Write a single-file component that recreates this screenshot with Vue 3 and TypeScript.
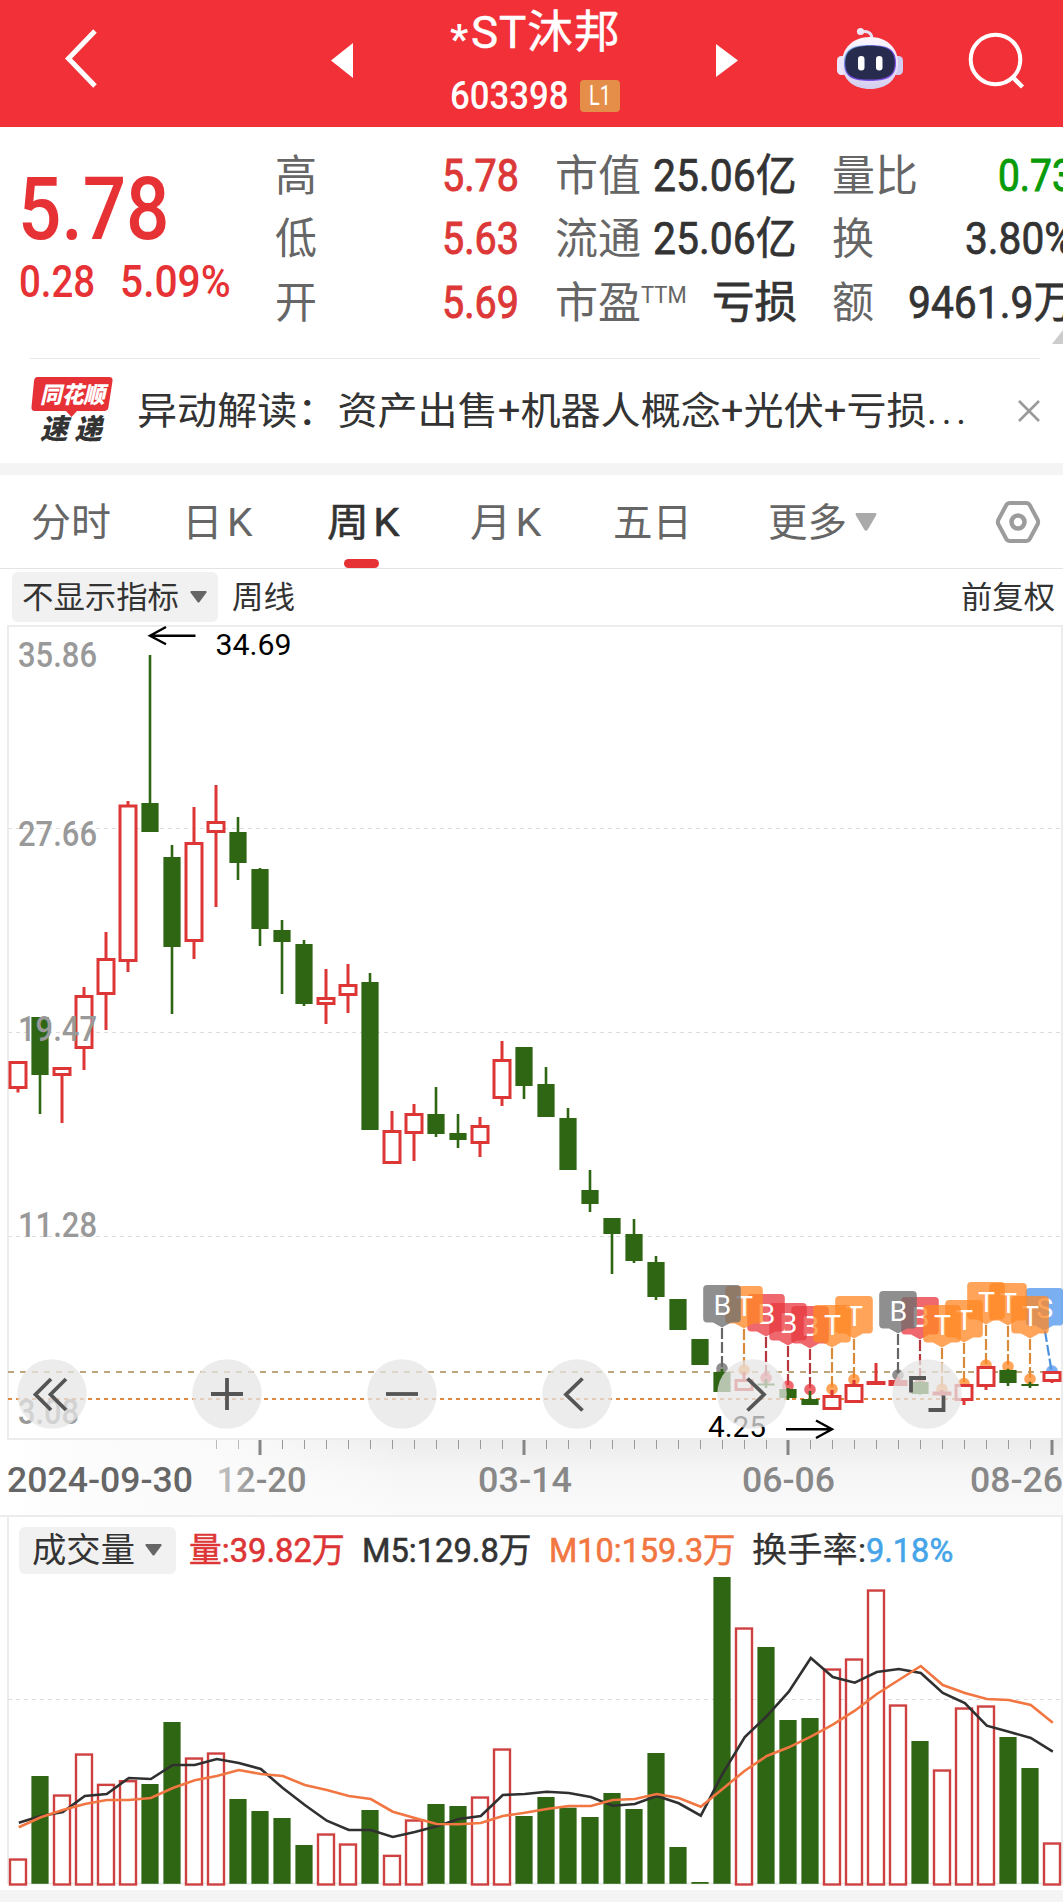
<script setup lang="ts">
interface Cell {
  label: string
  labelWidth: number
  sup?: string
  value: string
  valueWidth: number
  tone: 'up' | 'down' | 'plain'
}

interface Candle {
  up: boolean
  high: number
  top: number
  bottom: number
  low: number
}

interface Flag {
  index: number
  top: number
  letter: string
  kind: 'grey' | 'orange' | 'red' | 'blue'
  dot: number
}

// Squeezes or stretches a run of text to the given advance width.
const vFit = {
  mounted(el: HTMLElement, binding: { value: number }) {
    el.style.display = 'inline-block'
    el.style.whiteSpace = 'nowrap'
    const natural = el.offsetWidth
    el.style.transformOrigin = 'left center'
    el.style.transform = `scaleX(${binding.value / natural})`
    el.style.marginRight = `${binding.value - natural}px`
  },
}

const columns: Cell[][] = [
  [
    { label: '高', labelWidth: 42, value: '5.78', valueWidth: 77, tone: 'up' },
    { label: '低', labelWidth: 42, value: '5.63', valueWidth: 77, tone: 'up' },
    { label: '开', labelWidth: 42, value: '5.69', valueWidth: 77, tone: 'up' },
  ],
  [
    { label: '市值', labelWidth: 86, value: '25.06亿', valueWidth: 144, tone: 'plain' },
    { label: '流通', labelWidth: 86, value: '25.06亿', valueWidth: 144, tone: 'plain' },
    { label: '市盈', labelWidth: 86, sup: 'TTM', value: '亏损', valueWidth: 85, tone: 'plain' },
  ],
  [
    { label: '量比', labelWidth: 86, value: '0.73', valueWidth: 76, tone: 'down' },
    { label: '换', labelWidth: 42, value: '3.80%', valueWidth: 109, tone: 'plain' },
    { label: '额', labelWidth: 42, value: '9461.9万', valueWidth: 166, tone: 'plain' },
  ],
]

const STEP = 22
const cx = (i: number) => 18 + i * STEP

const c = (up: number, high: number, top: number, bottom: number, low: number): Candle => ({
  up: up === 1,
  high,
  top,
  bottom,
  low,
})

const candles: Candle[] = [
  c(1, 1061, 1061, 1089, 1092.5), c(0, 1017, 1017, 1075, 1114), c(1, 1067, 1067, 1076, 1123),
  c(1, 987, 995, 1049, 1070), c(1, 932, 958, 995, 1030), c(1, 801, 804.5, 962, 972),
  c(0, 655, 803, 832, 832), c(0, 845, 857, 947, 1014), c(1, 807, 842, 942, 959),
  c(1, 785, 821, 833, 907), c(0, 817, 832, 863, 880), c(0, 868, 869, 929, 946),
  c(0, 920, 930, 942, 994), c(0, 940, 944, 1004, 1006), c(1, 969, 997, 1005, 1024),
  c(1, 964, 984, 996, 1013), c(0, 973, 982, 1130, 1130), c(1, 1111, 1130, 1164, 1164),
  c(1, 1104, 1113, 1134, 1161), c(0, 1087, 1114, 1134, 1137), c(0, 1114, 1133, 1140, 1148),
  c(1, 1117, 1125, 1144, 1157), c(1, 1041, 1059, 1099, 1106), c(0, 1047, 1047, 1086, 1099),
  c(0, 1067, 1084, 1117, 1117), c(0, 1108, 1118, 1170, 1170), c(0, 1170, 1190, 1204, 1212),
  c(0, 1218, 1218, 1234, 1274), c(0, 1219, 1234, 1261, 1263), c(0, 1256, 1262, 1297, 1300),
  c(0, 1299, 1299, 1330, 1330), c(0, 1339, 1339, 1365, 1365), c(0, 1369, 1372, 1392, 1392),
  c(1, 1372, 1379, 1391, 1391), c(0, 1379, 1383.5, 1385.5, 1388), c(0, 1388, 1389, 1398, 1400),
  c(0, 1391, 1399, 1405, 1405), c(1, 1390, 1395, 1410, 1410), c(1, 1380, 1384, 1403, 1403),
  c(1, 1363, 1381, 1385, 1385), c(1, 1377, 1380, 1386, 1386), c(0, 1381, 1382, 1394, 1394.5),
  c(1, 1390, 1391.5, 1395.5, 1396), c(1, 1384, 1384, 1401, 1405), c(1, 1366, 1366, 1387, 1390),
  c(0, 1369, 1370, 1383, 1386), c(0, 1382, 1384, 1386, 1388), c(1, 1371, 1371, 1382, 1383),
]

// Painted back to front.
const flags: Flag[] = [
  { index: 47, top: 1288, letter: 'S', kind: 'blue', dot: 1371 },
  { index: 41, top: 1297, letter: 'B', kind: 'red', dot: 1384 },
  { index: 36, top: 1306, letter: 'B', kind: 'red', dot: 1389.5 },
  { index: 35, top: 1303, letter: 'B', kind: 'red', dot: 1386 },
  { index: 34, top: 1294, letter: 'B', kind: 'red', dot: 1378 },
  { index: 46, top: 1296, letter: 'T', kind: 'orange', dot: 1379 },
  { index: 45, top: 1283, letter: 'T', kind: 'orange', dot: 1366.5 },
  { index: 44, top: 1282, letter: 'T', kind: 'orange', dot: 1365 },
  { index: 43, top: 1300, letter: 'T', kind: 'orange', dot: 1383.5 },
  { index: 42, top: 1305, letter: 'T', kind: 'orange', dot: 1389 },
  { index: 38, top: 1296, letter: 'T', kind: 'orange', dot: 1379.5 },
  { index: 37, top: 1305, letter: 'T', kind: 'orange', dot: 1389 },
  { index: 33, top: 1286, letter: 'T', kind: 'orange', dot: 1370 },
  { index: 40, top: 1291, letter: 'B', kind: 'grey', dot: 1375 },
  { index: 32, top: 1285, letter: 'B', kind: 'grey', dot: 1368.5 },
]
const flagX = (f: Flag) => (f.index === 47 ? 1044.3 : cx(f.index))
const flagShape = (f: Flag) => {
  const x = flagX(f)
  const l = x - 18.8
  const r = x + 18.8
  const t = f.top
  const b = t + 37.5
  return `M${l + 4} ${t}H${r - 4}Q${r} ${t} ${r} ${t + 4}V${b - 4}Q${r} ${b} ${r - 4} ${b}H${x + 9}L${x} ${b + 5}L${x - 9} ${b}H${l + 4}Q${l} ${b} ${l} ${b - 4}V${t + 4}Q${l} ${t} ${l + 4} ${t}Z`
}

const priceLabels = [
  { text: '35.86', y: 667, x: 18, w: 79 },
  { text: '27.66', y: 846, x: 18, w: 79 },
  { text: '19.47', y: 1041, x: 18, w: 79 },
  { text: '11.28', y: 1237, x: 18, w: 79 },
  { text: '3.08', y: 1424, x: 18, w: 61 },
]

const ticks = Array.from({ length: 39 }, (_, k) => k + 9)
const isMajor = (i: number) => (i + 1) % 12 === 0
const dates = [
  { text: '2024-09-30', x: 7, w: 186, cls: 'strong' },
  { text: '12-20', x: 216.5, w: 90, cls: 'fade' },
  { text: '03-14', x: 478, w: 94, cls: '' },
  { text: '06-06', x: 742, w: 93, cls: '' },
  { text: '08-26', x: 970, w: 93, cls: '' },
]

const volumeTops = [
  895, 648, 703, 580, 671, 660, 672, 486, 592, 577, 717, 753, 774, 855, 820, 850, 750, 884, 778, 732, 738, 709, 565,
  768, 711, 743, 771, 699, 747, 579, 861, 966, 51, 202, 261, 480, 474, 325, 295, 88, 433, 543, 628, 442, 436, 531,
  624, 847,
].map((v) => 1560 + v / 3)

const m5 = [
  788, 768, 756, 708, 702, 654, 657, 615, 615, 597, 609, 627, 684, 735, 782, 810, 810, 831, 816, 799, 777, 768, 705,
  702, 695, 699, 711, 737, 732, 708, 730, 767, 640, 531, 468, 395, 294, 351, 368, 336, 327, 339, 399, 429, 497, 515,
  534, 575,
]
const m10 = [
  802, 772, 750, 732, 720, 720, 714, 684, 661, 648, 630, 642, 648, 675, 690, 708, 717, 755, 774, 792, 793, 789, 768,
  758, 747, 738, 738, 720, 717, 702, 714, 740, 686, 632, 588, 562, 530, 494, 452, 402, 360, 318, 375, 399, 417, 420,
  435, 488,
]
const line = (vs: number[]) => vs.map((v, i) => `${cx(i) + 0.8},${(1560 + v / 3).toFixed(1)}`).join(' ')

const controls = [
  { x: 52, d: 'M51 1379L35.5 1394.5L51 1410M66 1379L50.5 1394.5L66 1410' },
  { x: 227, d: 'M211 1394H243M227 1378V1410' },
  { x: 402, d: 'M386 1394H418' },
  { x: 577, d: 'M582.5 1378.5L566 1394.5L582.5 1410.5' },
  { x: 752, d: 'M747.5 1378.5L764 1394.5L747.5 1410.5' },
  { x: 927, d: 'M926 1378H911V1392.5M928.5 1410H943.5V1395.5' },
]
</script>

<template>
  <div class="page">
    <header class="head">
      <svg class="back" width="36" height="66" viewBox="0 0 36 66">
        <path d="M32 5L5.500 32.500L32 60" fill="none" stroke="#fff" stroke-width="5" />
      </svg>
      <svg class="prev" width="22" height="35" viewBox="0 0 22 35"><path d="M22 0V35L0 17.500Z" fill="#fff" /></svg>
      <div class="title">
        <div class="name"><span class="star">*</span><span v-fit="150" class="word">ST沐邦</span></div>
        <div class="code">
          <span v-fit="119">603398</span>
          <span class="badge"><span v-fit="22">L1</span></span>
        </div>
      </div>
      <svg class="next" width="22" height="33" viewBox="0 0 22 33"><path d="M0 0V33L22 16.500Z" fill="#fff" /></svg>
      <svg class="robot" width="68" height="64" viewBox="0 0 68 64">
        <defs>
          <linearGradient id="shell" x1="0" y1="0" x2="0" y2="1">
            <stop offset="0" stop-color="#fbf7ff" />
            <stop offset=".7" stop-color="#e3dcf6" />
            <stop offset="1" stop-color="#d3cdee" />
          </linearGradient>
          <linearGradient id="rim" x1="0" y1="0" x2="1" y2="1">
            <stop offset="0" stop-color="#7fc8f2" />
            <stop offset=".5" stop-color="#6a45d8" />
            <stop offset="1" stop-color="#8b5cf0" />
          </linearGradient>
        </defs>
        <path d="M25 5Q35 3 36 11" fill="none" stroke="#e9dff5" stroke-width="3" />
        <circle cx="24.500" cy="4.500" r="3.600" fill="#efe6f7" />
        <rect x="1" y="29" width="10" height="19" rx="4.500" fill="#ece6fa" />
        <rect x="57" y="29" width="10" height="19" rx="4.500" fill="#d3cdf2" />
        <path d="M34 10C51 10 62 21 62 36C62 53 50 62 34 62C18 62 6 53 6 36C6 21 17 10 34 10Z" fill="url(#shell)" />
        <path d="M34 18C50 18 60 21 60 36C60 51 50 54 34 54C18 54 8 51 8 36C8 21 18 18 34 18Z" fill="url(#rim)" />
        <path d="M34 18.800C49 18.800 58.800 22 58.800 36C58.800 50 49 52.600 34 52.600C19 52.600 9.200 50 9.200 36C9.200 22 19 18.800 34 18.800Z" fill="#272c4e" />
        <rect x="22" y="29" width="6.500" height="14.500" rx="3.200" fill="#fff" />
        <rect x="40" y="29" width="6.500" height="14.500" rx="3.200" fill="#fff" />
      </svg>
      <svg class="search" width="58" height="58" viewBox="0 0 58 58">
        <circle cx="27.500" cy="27.500" r="24.800" fill="none" stroke="#fff" stroke-width="4" />
        <path d="M44.500 45L54.500 55" stroke="#fff" stroke-width="4.500" />
      </svg>
    </header>

    <section class="quote">
      <div class="price">
        <div class="last"><span v-fit="152">5.78</span></div>
        <div class="change"><span v-fit="76">0.28</span><span v-fit="111">5.09%</span></div>
      </div>
      <div v-for="(col, n) in columns" :key="n" class="col" :class="'col' + n">
        <div v-for="cell in col" :key="cell.label" class="cell">
          <span class="label">
            <span v-fit="cell.labelWidth">{{ cell.label }}</span><sup v-if="cell.sup" v-fit="46">{{ cell.sup }}</sup>
          </span>
          <span class="value" :class="cell.tone"><span v-fit="cell.valueWidth">{{ cell.value }}</span></span>
        </div>
      </div>
      <i class="corner"></i>
    </section>

    <section class="news">
      <div class="brand">
        <svg width="84" height="42" viewBox="0 0 84 42">
          <path d="M7.500 1H79Q83 1 82.500 5L78.500 31Q78 35 74 35H47L41.500 41L36 35H5Q1 35 1.500 31L4 5Q4.500 1 7.500 1Z" fill="#e63136" />
          <text x="10" y="27" textLength="65" lengthAdjust="spacingAndGlyphs" class="brand-top">同花顺</text>
        </svg>
        <span v-fit="62" class="brand-bottom">速 递</span>
      </div>
      <span v-fit="790" class="headline">异动解读：资产出售+机器人概念+光伏+亏损</span><span v-fit="44" class="headline dots">...</span>
      <svg class="close" width="22" height="22" viewBox="0 0 22 22">
        <path d="M1 1L21 21M21 1L1 21" stroke="#999" stroke-width="2.600" />
      </svg>
    </section>

    <nav class="tabs">
      <span class="tab t1"><span v-fit="80">分时</span></span>
      <span class="tab t2"><span v-fit="71" class="gap">日K</span></span>
      <span class="tab t3 active"><span v-fit="73" class="gap">周K</span></span>
      <span class="tab t4"><span v-fit="72" class="gap">月K</span></span>
      <span class="tab t5"><span v-fit="79">五日</span></span>
      <span class="tab t6"><span v-fit="79">更多</span></span>
      <svg class="more" width="22" height="18" viewBox="0 0 22 18"><path d="M1.500 0H20.500Q22 .5 21 2.500L12.500 17Q11 18.500 9.500 17L1 2.500Q0 .5 1.500 0Z" fill="#aaa" /></svg>
      <svg class="gear" width="46" height="44" viewBox="0 0 46 44">
        <path d="M15 3H31Q33.500 3 34.700 5L42.500 19.500Q43.800 22 42.500 24.500L34.700 39Q33.500 41 31 41H15Q12.500 41 11.300 39L3.500 24.500Q2.200 22 3.500 19.500L11.300 5Q12.500 3 15 3Z" fill="none" stroke="#9c9c9c" stroke-width="4" />
        <circle cx="23" cy="22" r="6.500" fill="none" stroke="#9c9c9c" stroke-width="4.500" />
      </svg>
    </nav>

    <div class="toolbar">
      <span class="pill"><span v-fit="157" class="lift">不显示指标</span><svg width="17" height="12" viewBox="0 0 17 12"><path d="M1 0H16Q17 .5 16.500 1.500L9.500 11Q8.500 12 7.500 11L.5 1.500Q0 .5 1 0Z" fill="#666" /></svg></span>
      <span v-fit="63" class="period lift">周线</span>
      <span v-fit="94" class="adjust lift">前复权</span>
    </div>

    <svg class="kline" width="1063" height="890" viewBox="0 625 1063 890">
      <defs>
        <linearGradient id="axis-shade" x1="0" y1="0" x2="0" y2="1">
          <stop offset="0" stop-color="#ececec" />
          <stop offset=".45" stop-color="#f6f6f6" />
          <stop offset="1" stop-color="#fafafa" />
        </linearGradient>
        <linearGradient id="axis-fade" x1="0" y1="0" x2="1" y2="0">
          <stop offset="0" stop-color="#fff" />
          <stop offset=".12" stop-color="#fdfdfd" />
          <stop offset=".55" stop-color="#fbfbfb" stop-opacity=".9" />
          <stop offset="1" stop-color="#fff" stop-opacity="0" />
        </linearGradient>
        <linearGradient id="date-fade" gradientUnits="userSpaceOnUse" x1="214" y1="0" x2="262" y2="0">
          <stop offset="0" stop-color="#ccc" />
          <stop offset="1" stop-color="#888" />
        </linearGradient>
      </defs>

      <rect x="8" y="1440" width="1055" height="76" fill="url(#axis-shade)" />
      <rect x="8" y="1440" width="400" height="76" fill="url(#axis-fade)" />

      <g class="grid">
        <path d="M8 828.500H1063M8 1032.500H1063M8 1236.500H1063" />
      </g>
      <path class="frame" d="M1063 626H8V1439H1063M1062 626V1439" />
      <path d="M8 1372H1062" stroke="#bda57c" stroke-width="2" stroke-dasharray="6 6" />
      <path d="M8 1399H1062" stroke="#e0883f" stroke-width="2" stroke-dasharray="4 4" />

      <g v-for="f in flags" :key="'s' + f.index" :class="f.kind">
        <line class="stem" :x1="f.index === 47 ? 1045 : cx(f.index)" :y1="f.top + 43" :x2="cx(f.index)" :y2="f.dot + 3" />
        <circle class="dot" :cx="cx(f.index)" :cy="f.dot" r="5.800" />
      </g>

      <g v-for="(k, i) in candles" :key="'k' + i">
        <template v-if="k.up">
          <path class="up-line" :d="`M${cx(i)} ${k.high}V${k.top + 1}M${cx(i)} ${k.bottom - 1}V${k.low}`" />
          <rect class="up-box" :x="cx(i) - 8" :y="k.top + 1.5" width="16" :height="Math.max(0.5, k.bottom - k.top - 3)" />
        </template>
        <template v-else>
          <path class="down-line" :d="`M${cx(i)} ${k.high}V${k.low}`" />
          <rect class="down-box" :x="cx(i) - 8.6" :y="k.top" width="17.200" :height="k.bottom - k.top" />
        </template>
      </g>

      <g v-for="f in flags" :key="'f' + f.index" :class="f.kind">
        <path class="flag" :d="flagShape(f)" />
        <text class="flag-text" :x="flagX(f) + 0.5" :y="f.top + 29.500">{{ f.letter }}</text>
      </g>

      <g class="price-labels">
        <text v-for="p in priceLabels" :key="p.text" :x="p.x" :y="p.y" :textLength="p.w" lengthAdjust="spacingAndGlyphs">{{ p.text }}</text>
      </g>

      <g class="mark">
        <text x="215.500" y="655" textLength="76" lengthAdjust="spacingAndGlyphs">34.69</text>
        <path d="M195.500 635.700H151M166 627L150 635.700L166 644.300" />
        <text x="708" y="1437" textLength="58" lengthAdjust="spacingAndGlyphs">4.25</text>
        <path d="M786 1429.300H831M816 1420.500L832 1429.300L816 1438" />
      </g>

      <g v-for="b in controls" :key="b.x">
        <circle :cx="b.x" cy="1394" r="34.800" fill="#e6e6e6" fill-opacity=".74" />
        <path :d="b.d" fill="none" stroke="#555" stroke-width="3.800" />
      </g>

      <template v-for="i in ticks" :key="'t' + i">
        <rect v-if="isMajor(i)" :x="cx(i) - 1.5" y="1440" width="3" height="15" fill="#858585" />
        <rect v-else :x="cx(i)" y="1440" width="1" height="9" :fill="i < 11 ? '#bbb' : '#999'" />
      </template>
      <g class="dates">
        <text v-for="d in dates" :key="d.text" :class="d.cls" :x="d.x" y="1492" :textLength="d.w" lengthAdjust="spacingAndGlyphs">{{ d.text }}</text>
      </g>
    </svg>

    <section class="volume">
      <div class="legend">
        <span class="pill vol"><span v-fit="103">成交量</span><svg width="17" height="12" viewBox="0 0 17 12"><path d="M1 0H16Q17 .5 16.500 1.500L9.500 11Q8.500 12 7.500 11L.5 1.500Q0 .5 1 0Z" fill="#666" /></svg></span>
        <span v-fit="156" class="l1">量:39.82万</span>
        <span v-fit="169" class="l2">M5:129.8万</span>
        <span v-fit="187" class="l3">M10:159.3万</span>
        <span v-fit="114" class="l4">换手率:</span>
        <span v-fit="87" class="l5">9.18%</span>
      </div>
      <svg class="bars" width="1063" height="314" viewBox="0 1576 1063 314">
        <path class="grid" d="M8 1699.500H1063" />
        <path d="M8 1883.500H1063" stroke="#ebebeb" stroke-width="2" />
        <g v-for="(t, i) in volumeTops" :key="i">
          <rect v-if="candles[i].up" class="vol-up" :x="cx(i) - 8" :y="t + 1.2" width="16" :height="1883.3 - t" />
          <rect v-else class="down-box" :x="cx(i) - 8.6" :y="t" width="17.200" :height="1883.8 - t" />
        </g>
        <polyline :points="line(m5)" fill="none" stroke="#303030" stroke-width="2.600" />
        <polyline :points="line(m10)" fill="none" stroke="#f27641" stroke-width="2.600" />
      </svg>
    </section>
    <div class="foot"></div>
  </div>
</template>

<style>
body {
  background: #fff;
  overflow: hidden;
}
</style>

<style scoped>
.page {
  width: 1063px;
  height: 1902px;
  overflow: hidden;
  background: #fff;
  color: #333;
  font-family: Roboto, 'Noto Sans CJK SC', sans-serif;
}
svg {
  display: block;
  flex: none;
}
.head {
  display: flex;
  height: 127px;
  background: #f23038;
  color: #fff;
}
.back {
  margin: 26px 0 0 63px;
}
.prev {
  margin: 43px 0 0 232px;
}
.title {
  width: 184px;
  margin-left: 97px;
}
.name {
  display: flex;
  height: 66px;
  line-height: 66px;
}
.star {
  width: 21px;
  font-size: 40px;
  font-weight: 700;
  line-height: 79px;
}
.word {
  font-size: 45px;
  letter-spacing: 1px;
  -webkit-text-stroke: 0.5px;
}
.code {
  display: flex;
  align-items: center;
  height: 59px;
  font-size: 38px;
  font-weight: 500;
}
.badge {
  display: flex;
  align-items: center;
  box-sizing: border-box;
  width: 40px;
  height: 32px;
  margin-left: 11px;
  padding-left: 9px;
  border-radius: 4px;
  background: #e58e49;
  font-size: 28px;
  font-weight: 400;
}
.next {
  margin: 44px 0 0 82px;
}
.robot {
  margin: 27px 0 0 98px;
}
.search {
  margin: 32px 0 0 64px;
}
.quote {
  position: relative;
  display: flex;
  height: 231px;
  font-size: 44px;
}
.price {
  flex: none;
  width: 276px;
  color: #e63135;
  font-weight: 500;
}
.last {
  height: 107px;
  margin: 28px 0 0 18px;
  font-size: 88px;
  line-height: 107px;
}
.change {
  display: flex;
  gap: 25px;
  height: 40px;
  margin: 0 0 0 19px;
  line-height: 40px;
}
.col {
  flex: none;
  padding-top: 18px;
}
.col0 {
  width: 244px;
  margin-left: -1px;
}
.col1 {
  width: 242px;
  margin-left: 36px;
}
.col2 {
  width: 242px;
  margin-left: 35px;
}
.cell {
  display: flex;
  justify-content: space-between;
  height: 63.4px;
  line-height: 63.4px;
}
.label {
  display: flex;
  color: #666;
  font-size: 43px;
}
.label sup {
  font-size: 23px;
  line-height: 48px;
  vertical-align: baseline;
}
.value {
  -webkit-text-stroke: 0.75px;
}
.value.up {
  color: #dd3838;
  -webkit-text-stroke: 1px;
}
.value.down {
  color: #099b09;
  -webkit-text-stroke: 1px;
}
.corner {
  position: absolute;
  right: 0;
  bottom: 14px;
  width: 11px;
  height: 14px;
  background: #ccc;
  clip-path: polygon(0 100%, 100% 0, 100% 100%);
}
.news {
  display: flex;
  align-items: center;
  height: 104px;
  margin: 0 23px 0 30px;
  border-top: 1px solid #e8e8e8;
}
.brand {
  width: 107px;
  height: 70px;
}
.brand-top {
  font: italic 900 23px 'Noto Sans CJK SC', sans-serif;
  fill: #fff;
}
.brand-bottom {
  margin: -5px 0 0 10px;
  font-size: 28px;
  font-style: italic;
  font-weight: 900;
  line-height: 34px;
}
.headline {
  font-size: 38px;
  line-height: 60px;
}
.dots {
  letter-spacing: 5px;
}
.close {
  margin-left: auto;
}
.tabs {
  display: flex;
  align-items: center;
  height: 93px;
  border-top: 12px solid #f4f4f4;
  border-bottom: 1px solid #e3e3e3;
  color: #666;
  font-size: 39px;
}
.tab {
  position: relative;
  flex: none;
  height: 93px;
  line-height: 96px;
}
.t1 { width: 150.5px; margin-left: 31px; }
.t2 { width: 145px; }
.t3 { width: 143.5px; }
.t4 { width: 143px; }
.t5 { width: 155px; }
.t6 { width: 86.5px; }
.gap::first-letter {
  letter-spacing: 4px;
}
.active {
  color: #333;
  -webkit-text-stroke: 0.55px;
}
.active::after {
  position: absolute;
  bottom: 0;
  left: 17px;
  width: 35px;
  height: 9px;
  border-radius: 5px;
  background: #e63135;
  content: '';
}
.gear {
  margin-left: 118px;
}
.toolbar {
  display: flex;
  align-items: center;
  height: 56px;
  font-size: 31px;
}
.pill {
  display: flex;
  align-items: center;
  box-sizing: border-box;
  width: 206px;
  height: 50px;
  margin-left: 12px;
  padding-left: 10px;
  border-radius: 6px;
  background: #f1f1f1;
}
.pill svg {
  margin-left: 11px;
}
.lift {
  margin-bottom: 5px;
}
.period {
  margin-left: 14px;
}
.adjust {
  margin-left: auto;
}
.toolbar::after {
  width: 8px;
  content: '';
}
.grid {
  fill: none;
  stroke: #dcdcdc;
  stroke-width: 1;
  stroke-dasharray: 4 4;
}
.frame {
  fill: none;
  stroke: #ececec;
  stroke-width: 2;
}
.up-line {
  fill: none;
  stroke: #dd3636;
  stroke-width: 3;
}
.up-box {
  fill: #fff;
  stroke: #dd3636;
  stroke-width: 3;
}
.down-line {
  stroke: #2f6613;
  stroke-width: 2.6;
}
.down-box {
  fill: #2f6613;
}
.stem {
  stroke-width: 2.2;
  stroke-dasharray: 11 3;
}
.grey .stem { stroke: #666; }
.orange .stem { stroke: #d98b3c; }
.red .stem { stroke: #b5363d; }
.blue .stem { stroke: #4a90dd; }
.flag,
.dot {
  fill-opacity: .76;
}
.grey .flag,
.grey .dot { fill: #6c6c6c; }
.orange .flag,
.orange .dot { fill: #ff8825; }
.red .flag,
.red .dot { fill: #e83840; }
.blue .flag,
.blue .dot { fill: #5096ec; }
.flag-text {
  fill: #fff;
  font-size: 28.5px;
  text-anchor: middle;
}
.price-labels {
  fill: #999;
  font-size: 35px;
  font-weight: 500;
}
.mark text {
  fill: #000;
  font-size: 30px;
}
.mark path {
  fill: none;
  stroke: #000;
  stroke-width: 2.4;
}
.dates {
  fill: #888;
  font-size: 34.5px;
  font-weight: 500;
}
.dates .strong {
  fill: #666;
}
.dates .fade {
  fill: url(#date-fade);
}
.volume {
  box-sizing: border-box;
  height: 375px;
  border-top: 2px solid #ececec;
  background: linear-gradient(#ececec, #ececec) 7px 0 / 2px 367px no-repeat,
    linear-gradient(#ececec, #ececec) 1061px 0 / 2px 367px no-repeat;
}
.legend {
  display: flex;
  align-items: center;
  height: 59px;
  padding-top: 9px;
  padding-bottom: 2px;
  box-sizing: border-box;
  font-size: 34px;
}
.legend > span,
.legend .pill > span {
  line-height: 44px;
}
.legend > span:not(.pill) {
  -webkit-text-stroke: 0.6px;
}
.pill.vol {
  width: 157px;
  height: 47px;
  margin-left: 19px;
  padding-left: 13px;
}
.pill.vol > span {
  padding-bottom: 1px;
}
.pill.vol svg {
  margin-left: 10px;
}
.l1 { margin-left: 13px; color: #dd3535; }
.l2 { margin-left: 17px; }
.l3 { margin-left: 18px; color: #f27641; }
.legend > .l4:not(.pill) { margin-left: 16px; -webkit-text-stroke: 0.2px; }
.l5 { color: #45a5e8; }
.vol-up {
  fill: #fff;
  stroke: #cf4040;
  stroke-width: 2.4;
}
.foot {
  height: 12px;
  background: #f4f4f4;
}
</style>
